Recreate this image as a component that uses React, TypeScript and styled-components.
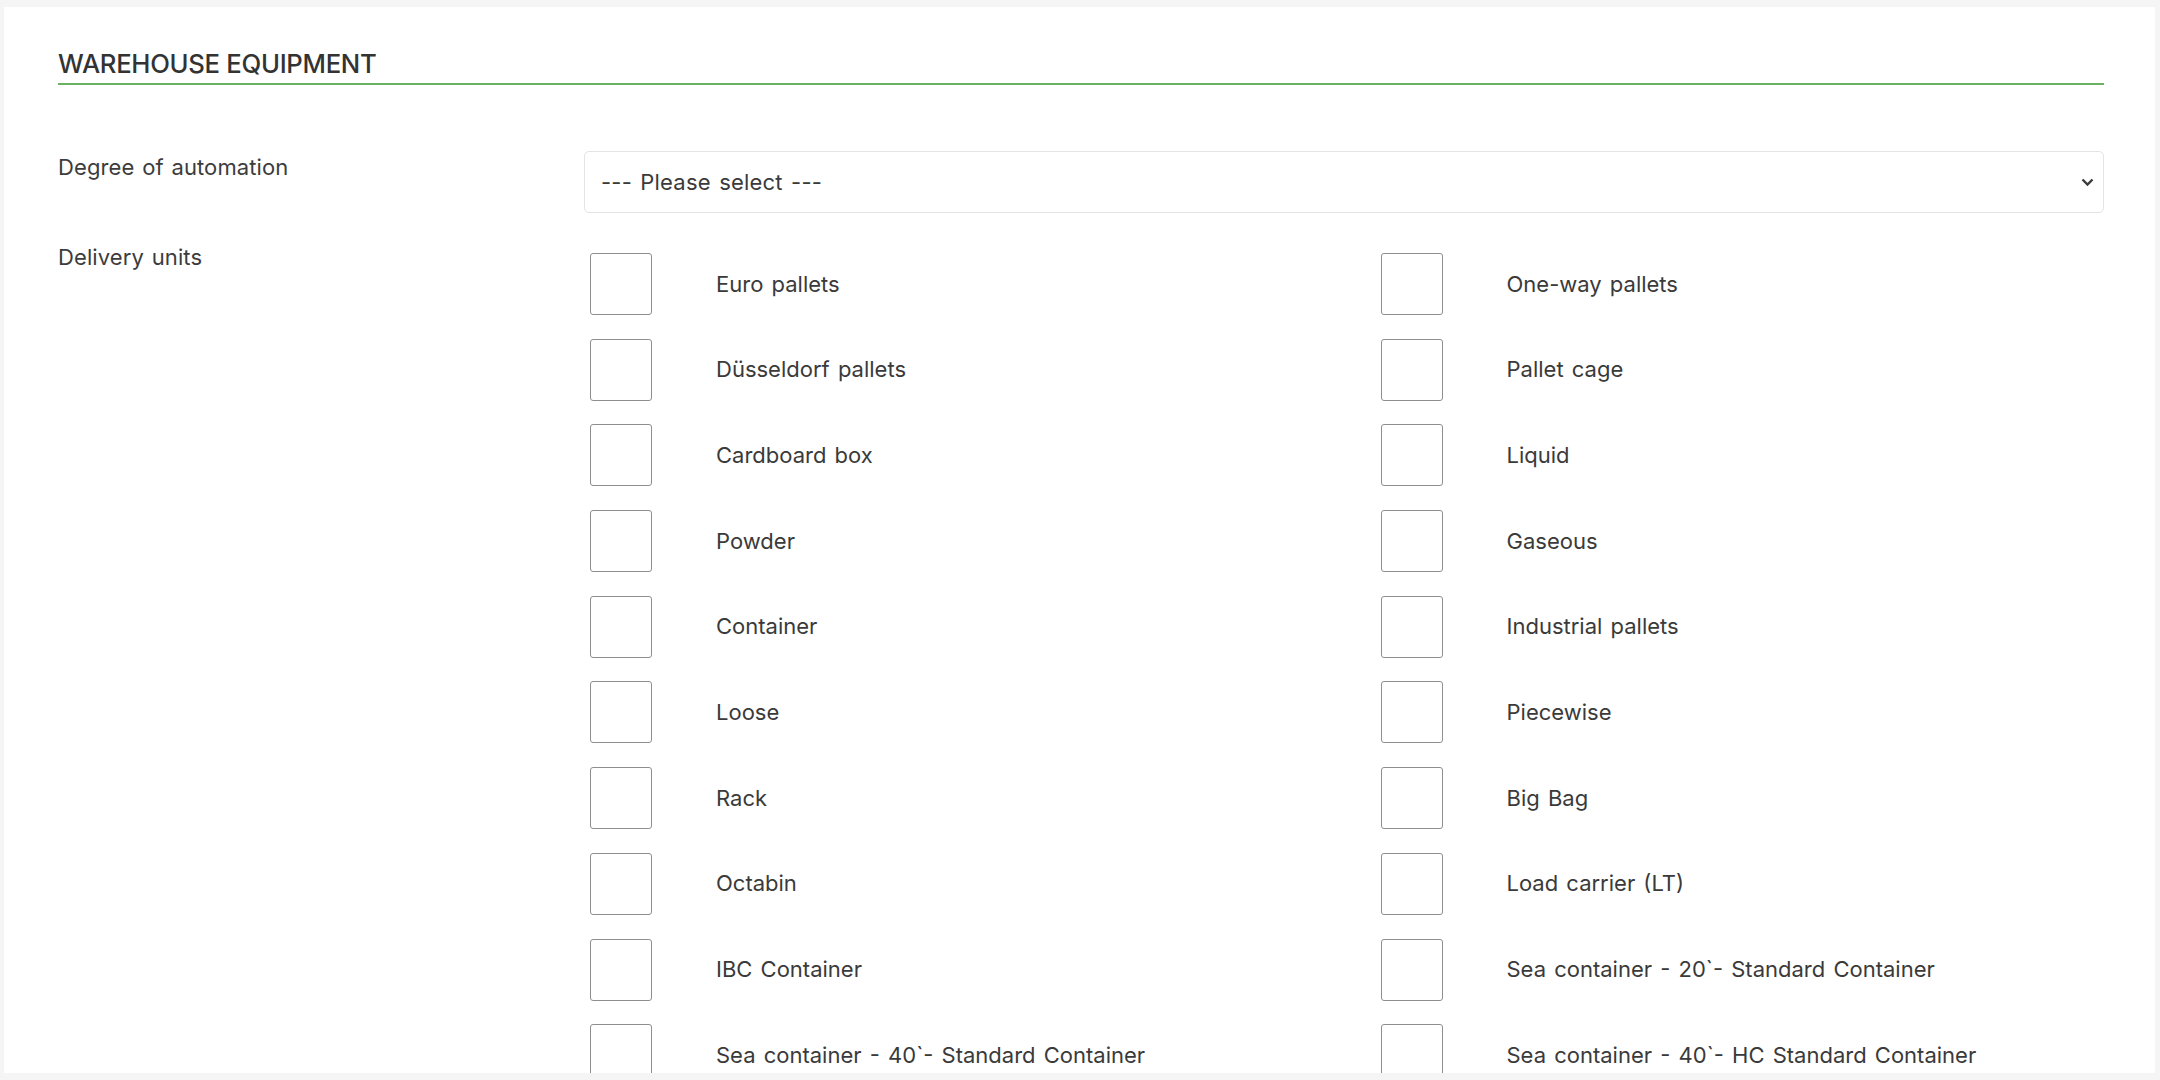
import React from "react";
import styled, { createGlobalStyle } from "styled-components";

const GlobalStyle = createGlobalStyle`
  html, body {
    margin: 0;
    padding: 0;
    background: #f5f5f5;
  }
  body {
    font-family: Inter, "Noto Sans", "Liberation Sans", sans-serif;
    color: #383838;
  }
  * { box-sizing: border-box; }
`;

const Card = styled.div`
  margin: 7px 5px 0 4px;
  height: 1066px;
  overflow: hidden;
  background: #ffffff;
  padding: 0 51px 0 54px;
`;

const Header = styled.div`
  padding: 40px 0 2px;
  border-bottom: 2px solid #6ab163;
`;

const Title = styled.h2`
  margin: 0;
  font-size: 25.7px;
  line-height: 34px;
  font-weight: 500;
  color: #333333;
  letter-spacing: -0.3px;
`;

const Form = styled.div`
  display: flex;
  flex-direction: column;
  gap: 28px;
  margin-top: 66px;
`;

const FormRow = styled.div`
  display: grid;
  grid-template-columns: 526px 1fr;
  align-items: start;
`;

const FieldLabel = styled.label`
  font-size: 22px;
  line-height: 33px;
  color: #3c3c3c;
  letter-spacing: 0.1px;
  word-spacing: 1.5px;
`;

const SelectWrap = styled.div`
  position: relative;
`;

const Select = styled.select`
  appearance: none;
  -webkit-appearance: none;
  width: 100%;
  height: 62px;
  border: 1px solid #e4e4e4;
  border-radius: 5px;
  background: #ffffff;
  padding: 0 40px 0 16px;
  font-family: inherit;
  font-size: 22px;
  color: #3a3a3a;
  letter-spacing: 0.2px;
  word-spacing: 2px;
  outline: none;
`;

const Chevron = styled.svg`
  position: absolute;
  right: 10px;
  top: 50%;
  transform: translateY(-50%);
  pointer-events: none;
`;

const CheckGrid = styled.div`
  display: grid;
  grid-template-columns: 790.5px 1fr;
  row-gap: 23.7px;
  padding: 12px 0 0 6px;
`;

const CheckItem = styled.label`
  display: flex;
  align-items: center;
  gap: 64px;
  font-size: 22px;
  line-height: 33px;
  color: #3a3a3a;
  letter-spacing: 0px;
  word-spacing: 2px;
`;

const Box = styled.input`
  appearance: none;
  -webkit-appearance: none;
  flex: none;
  margin: 0;
  width: 62px;
  height: 62px;
  border: 1.5px solid #8e8e8e;
  border-radius: 3px;
  background: #ffffff;
`;

const units: [string, string][] = [
  ["Euro pallets", "One-way pallets"],
  ["Düsseldorf pallets", "Pallet cage"],
  ["Cardboard box", "Liquid"],
  ["Powder", "Gaseous"],
  ["Container", "Industrial pallets"],
  ["Loose", "Piecewise"],
  ["Rack", "Big Bag"],
  ["Octabin", "Load carrier (LT)"],
  ["IBC Container", "Sea container - 20`- Standard Container"],
  ["Sea container - 40`- Standard Container", "Sea container - 40`- HC Standard Container"],
];

export default function App() {
  return (
    <>
      <GlobalStyle />
      <Card>
        <Header>
          <Title>WAREHOUSE EQUIPMENT</Title>
        </Header>
        <Form>
          <FormRow>
            <FieldLabel>Degree of automation</FieldLabel>
            <SelectWrap>
              <Select defaultValue="">
                <option value="">--- Please select ---</option>
              </Select>
              <Chevron width="13" height="9" viewBox="0 0 13 9">
                <polyline points="1.5,2 6.5,7 11.5,2" fill="none" stroke="#3a3a3a" strokeWidth="2.4" />
              </Chevron>
            </SelectWrap>
          </FormRow>
          <FormRow>
            <FieldLabel>Delivery units</FieldLabel>
            <CheckGrid>
              {units.flat().map((u) => (
                <CheckItem key={u}>
                  <Box type="checkbox" />
                  <span>{u}</span>
                </CheckItem>
              ))}
            </CheckGrid>
          </FormRow>
        </Form>
      </Card>
    </>
  );
}
